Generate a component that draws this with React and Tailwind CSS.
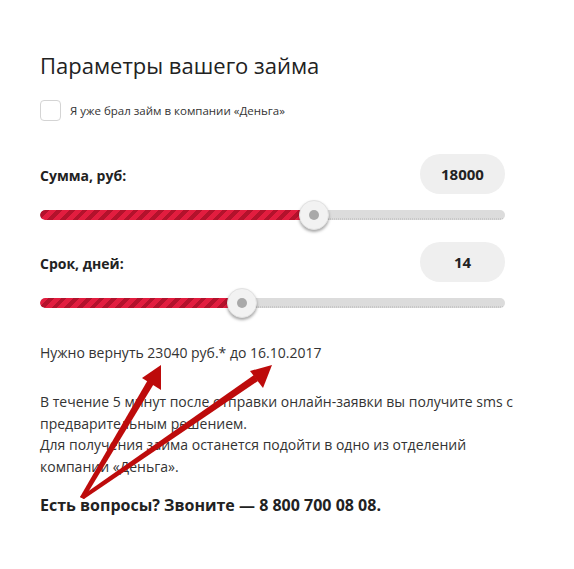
import React from "react";

const stripes = {
  backgroundImage:
    "repeating-linear-gradient(-45deg, #e21d3f 0px, #e21d3f 5px, #b3122c 5px, #b3122c 9px)",
};

function Slider({ pct }) {
  return (
    <div className="relative h-[30px] flex items-center">
      <div className="relative w-full h-[10px] rounded-full bg-[#dcdcdc] overflow-hidden">
        <div className="absolute left-0 right-0 bottom-0 h-[2px] bg-[repeating-linear-gradient(90deg,#c8c8c8_0px,#c8c8c8_1px,transparent_1px,transparent_2px)]" />
        <div className="absolute left-0 top-0 bottom-0 rounded-full" style={{ width: pct + "%", ...stripes }} />
      </div>
      <div
        className="absolute top-0 w-[30px] h-[30px] -ml-[15px] rounded-full bg-[#f2f2f2] shadow-[0_2px_3px_rgba(0,0,0,0.35)] border border-[#e2e2e2] flex items-center justify-center"
        style={{ left: pct + "%" }}
      >
        <div className="w-[10px] h-[10px] rounded-full bg-[#a9a9a9]" />
      </div>
    </div>
  );
}

function Row({ label, value, pct }) {
  return (
    <div>
      <div className="flex items-center justify-between">
        <div className="text-[14px] font-bold text-[#222] pt-[3px]">{label}</div>
        <div className="w-[85px] h-[40px] rounded-full bg-[#efefef] flex items-center justify-center text-[15px] font-bold text-[#222]">
          {value}
        </div>
      </div>
      <div className="mt-[6px]">
        <Slider pct={pct} />
      </div>
    </div>
  );
}

export default function App() {
  return (
    <div
      className="relative w-[574px] h-[569px] bg-white text-[#222]"
      style={{ fontFamily: '"Open Sans", "Noto Sans", sans-serif' }}
    >
      <div className="pl-[40px] pr-[69px] pt-[48px]">
        <h1 className="text-[22px] leading-[34px] font-normal text-[#222]">Параметры вашего займа</h1>
        <label className="mt-[18px] flex items-center gap-[9px]">
          <span className="w-[21px] h-[21px] rounded-[4px] border border-[#d4d4d4] bg-white" />
          <span className="text-[11.5px] text-[#333]">Я уже брал займ в компании «Деньга»</span>
        </label>
        <div className="mt-[33px]">
          <Row label="Сумма, руб:" value="18000" pct={58.9} />
        </div>
        <div className="mt-[12px]">
          <Row label="Срок, дней:" value="14" pct={43.4} />
        </div>
        <p className="mt-[24px] text-[14px] leading-[21px] text-[#333]">Нужно вернуть 23040 руб.* до 16.10.2017</p>
        <div className="mt-[28px] text-[14px] leading-[21.5px] text-[#333] whitespace-nowrap">
          <div>В течение 5 минут после отправки онлайн-заявки вы получите sms с</div>
          <div>предварительным решением.</div>
          <div>Для получения займа останется подойти в одно из отделений</div>
          <div>компании «Деньга».</div>
        </div>
        <p className="mt-[16px] text-[16px] font-bold text-[#222]">Есть вопросы? Звоните — 8 800 700 08 08.</p>
      </div>
      <svg className="absolute inset-0 pointer-events-none" width="574" height="569" viewBox="0 0 574 569">
        <g fill="#bd0b0b">
          <polygon points="80,497 149,378 155,382 84,499" />
          <polygon points="161,365 161,390 142,378" />
          <polygon points="80,497 254,375 258,381 84,499" />
          <polygon points="272,365 263,388 250,371" />
        </g>
      </svg>
    </div>
  );
}
